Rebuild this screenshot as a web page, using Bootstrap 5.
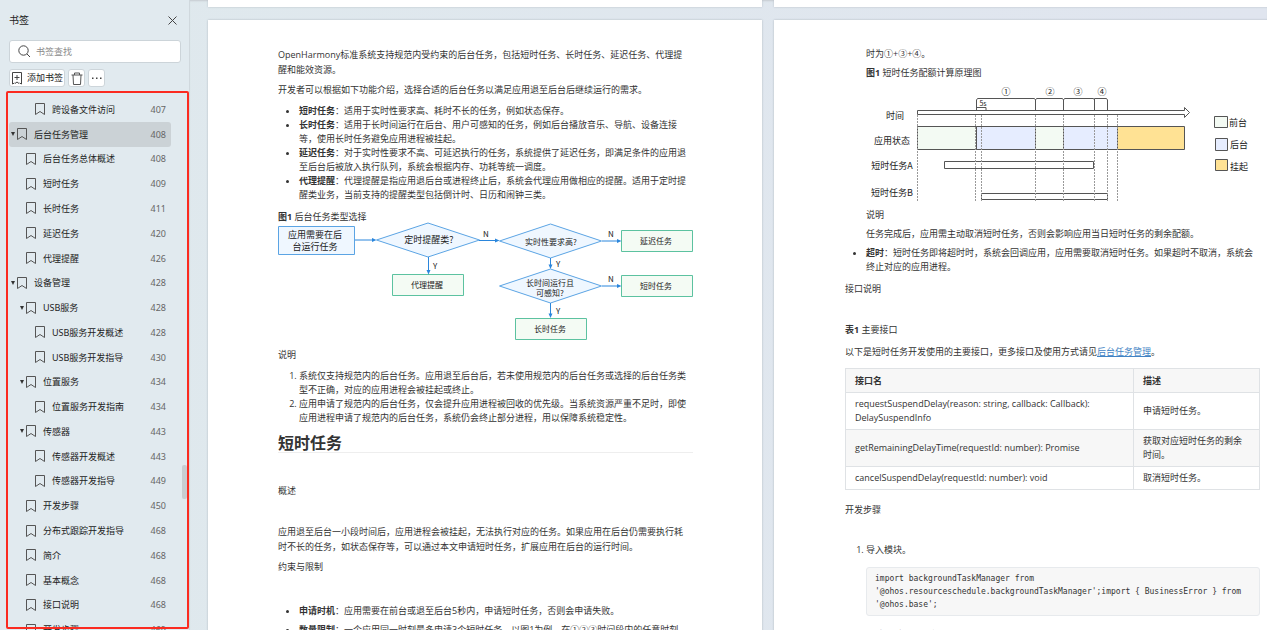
<!DOCTYPE html>
<html lang="zh-CN">
<head>
<meta charset="utf-8">
<meta name="viewport" content="width=device-width, initial-scale=1">
<title>书签</title>
<link href="https://cdn.jsdelivr.net/npm/bootstrap@5.3.0/dist/css/bootstrap.min.css" rel="stylesheet">
<style>
body{font:9px/15px "Open Sans","Noto Sans CJK SC",sans-serif;color:#333;background:linear-gradient(90deg,#dfe9ed,#e0e5ef);}
/* bookmark panel */
.side{width:190px;background:#e1eaef;border-right:1px solid #d0d8dd;font-family:"Noto Sans","Noto Sans CJK SC",sans-serif;color:#222}
.side-head{height:40px;font-size:10px;padding:0 8px 0 9px}
.close-btn{width:18px;height:18px}
.search-box{height:23px;margin:0 8px 0 9px;border:1px solid #ccd4d9;border-radius:3px;padding-left:8px}
.search-box input{font-size:9px;outline:0;height:19px;padding-left:5px}
.search-box input::placeholder{color:#8b8b8b}
.tools{padding:6px 9px 4px;gap:3px}
.tool-btn{height:18px;min-width:17px;padding:0 1px;font-size:9px;line-height:16px;background:#fff;border:1px solid #cdd5da;border-radius:3px;color:#222}
.tree-wrap{padding:6px 0 0 9px;min-height:0}
.tree-frame{inset:0 0 1px 6px;border:2px solid #fb2b20;border-radius:2px;pointer-events:none;z-index:2}
.tree{display:grid;grid-auto-rows:1fr;height:545px;width:162px}
.tree a{color:#222;padding:0 5px 0 2px;border-radius:3px}
.tree a.current{background:#cbd2d6}
.tree .lv1{padding-left:11px}
.tree .lv2{padding-left:20px}
.twist{width:6px;font-size:0}
.tree svg.mark-ico{margin-right:7px}
.page-no{color:#666}
.thumb{right:2px;top:374px;width:5px;height:34px;border-radius:2px;background:#c8cdd1}
/* document canvas */
.canvas{display:grid;grid-template-columns:554px 554px;grid-template-rows:7px 1fr;gap:13px 12px;padding-left:18px;box-shadow:inset 0 2px 2px -1px #c5cbd0}
.sheet{background:#fff;box-shadow:0 0 2px #aeb7bf}
.sheet-body{padding:27px 69px 0 70px;white-space:nowrap}
.sheet-body.right{padding-left:71px;padding-right:68px}
.sheet ul,.sheet ol{padding-left:21px;margin:0;line-height:14px}
.sheet p{margin:0}
.sheet svg{display:block;overflow:visible}
.sheet svg text{dominant-baseline:central;font-family:"Noto Sans CJK SC",sans-serif;fill:#222}
.s5{margin-top:5px!important}.s7{margin-top:7px!important}
.s26{margin-top:26px!important}.s30{margin-top:30px!important}
.title{font-size:16px;line-height:18px;font-weight:700;margin:9px 0 0;border-bottom:1px solid #eee}
.api{width:415px;margin:9px 0 12px;table-layout:fixed;white-space:normal;line-height:14px;color:#333}
.api th,.api td{border:1px solid #dfe2e5;padding:4px 9px;vertical-align:middle}
.api th{padding-top:5px}
.api .c1{width:288px}
.api tr.tint>*{background:#f7f7f7}
.source{margin:10px 0 12px;padding:4px 8px;height:49px;background:#f7f7f7;border:1px solid #e7eaed;border-radius:3px;font:8px/13px "DejaVu Sans Mono",monospace;color:#333;overflow:hidden}
.doc-link{color:#4183c4;text-decoration:underline}
.flow .a{fill:#eff7ff;stroke:#5ba4e4}.flow .g{fill:#f4fbf4;stroke:#5cc2a0}
.flow .w{stroke:#2b86dc;fill:none}.flow .h{fill:#2b86dc}
.flow text{font-size:8px;text-anchor:middle}
.flow .t9,.timing text{font-size:9px}
.timing .n{text-anchor:middle}
.timing .o{fill:#fff;stroke:#555}.timing .fg{fill:#f3faf3;stroke:#555}.timing .bg{fill:#e6edff;stroke:#555}.timing .hang{fill:#ffe294;stroke:#555}
.timing .d{stroke:#999;stroke-dasharray:2 1;fill:none}
.timing .tiny{font-size:7px}
</style>
</head>
<body>
<svg class="d-none"><defs>
<symbol id="bm" viewBox="0 0 10 12"><path d="M.5.5h9v11L5 8.500.5 11.500z" fill="none" stroke="#555"/></symbol>
<symbol id="tw" viewBox="0 0 4 4"><path d="M0 0h4L2 4z" fill="#333"/></symbol>
</defs></svg>
<div class="d-flex vh-100 overflow-hidden">
<aside class="side d-flex flex-column flex-shrink-0 overflow-hidden">
  <div class="side-head d-flex flex-shrink-0 align-items-center justify-content-between"><span>书签</span>
    <button class="close-btn btn p-0 border-0 d-flex align-items-center justify-content-center" aria-label="关闭"><svg width="9" height="9"><path d="M.5.5l8 8m0-8l-8 8" stroke="#444" fill="none"/></svg></button></div>
  <label class="search-box d-flex flex-shrink-0 align-items-center bg-white"><svg width="13" height="13" viewBox="0 0 13 13"><circle cx="5.500" cy="5.500" r="4.700" fill="none" stroke="#444"/><path d="M9 9l3 3" stroke="#444"/></svg>
    <input type="search" class="border-0 bg-transparent w-75" placeholder="书签查找" aria-label="书签查找"></label>
  <div class="tools d-flex flex-shrink-0">
    <button class="tool-btn d-flex align-items-center"><svg class="me-1" width="12" height="13" viewBox="0 0 12 13"><path d="M3.500 11L1.500 12V.5h9V12l-2-1M4 11.500l2-1.500 2 1.500M6 3v5M3.500 5.500h5" fill="none" stroke="#444"/></svg>添加书签</button>
    <button class="tool-btn d-flex align-items-center justify-content-center" aria-label="删除"><svg width="12" height="13" viewBox="0 0 12 13"><path d="M.5 3h11M3.500 3V1h5v2M2 3l.5 9.500h7L10 3" fill="none" stroke="#555"/></svg></button>
    <button class="tool-btn d-flex align-items-center justify-content-center" aria-label="更多"><svg width="10" height="2"><path d="M0 .5h1.500V2H0zM4 .5h1.500V2H4zM8 .5h1.500V2H8z" fill="#444"/></svg></button>
  </div>
  <div class="tree-wrap position-relative flex-fill">
    <div class="tree-frame position-absolute"></div>
    <div class="thumb position-absolute"></div>
    <nav class="tree" id="tree" aria-label="书签"></nav>
  </div>
</aside>
<main class="canvas flex-fill overflow-hidden">
  <div class="sheet"></div><div class="sheet"></div>
  <article class="sheet sheet-body">
    <p>OpenHarmony标准系统支持规范内受约束的后台任务，包括短时任务、长时任务、延迟任务、代理提<br>醒和能效资源。</p>
    <p class="s5">开发者可以根据如下功能介绍，选择合适的后台任务以满足应用退至后台后继续运行的需求。</p>
    <ul class="s7">
      <li><b>短时任务</b>：适用于实时性要求高、耗时不长的任务，例如状态保存。</li>
      <li><b>长时任务</b>：适用于长时间运行在后台、用户可感知的任务，例如后台播放音乐、导航、设备连接<br>等，使用长时任务避免应用进程被挂起。</li>
      <li><b>延迟任务</b>：对于实时性要求不高、可延迟执行的任务，系统提供了延迟任务，即满足条件的应用退<br>至后台后被放入执行队列，系统会根据内存、功耗等统一调度。</li>
      <li><b>代理提醒</b>：代理提醒是指应用退后台或进程终止后，系统会代理应用做相应的提醒。适用于定时提<br>醒类业务，当前支持的提醒类型包括倒计时、日历和闹钟三类。</li>
    </ul>
    <p class="s7"><b>图1</b> 后台任务类型选择</p>
    <svg class="flow" width="415" height="116" viewBox="0 1 415 116">
      <path class="a" d="M.5 3.500h76v28H.5zM98.500 17L150 0l51.500 17L150 34zM221.500 18l51-17 51 17-51 17zM221.500 63l51-17 51 17-51 17z"/>
      <path class="g" d="M343.500 7.500h71v21h-71zM343.500 52.500h71v21h-71zM114.500 51.500h71v21h-71zM237.500 95.500h71v21h-71z"/>
      <path class="w" d="M77 17h18M201 17.500h18M324 18h17M324 63h17M150.500 34v14M272.500 35v8M272.500 80v12"/>
      <path class="h" d="M94 15l4.500 2-4.500 2zM217 15.500l4.500 2-4.500 2zM339 16l4.500 2-4.500 2zM339 61l4.500 2-4.500 2zM148.500 47l2 4.500 2-4.500zM270.500 41.500l2 4.500 2-4.500zM270.500 90.500l2 4.500 2-4.500z"/>
      <text class="t9" x="37" y="11">应用需要在后</text><text class="t9" x="37" y="23">台运行任务</text>
      <text class="t9" x="151" y="16">定时提醒类?</text><text x="273" y="18">实时性要求高?</text>
      <text x="272" y="59">长时间运行且</text><text x="272" y="69">可感知?</text>
      <text x="378" y="17">延迟任务</text><text x="378" y="62">短时任务</text><text x="149" y="61">代理提醒</text><text x="272" y="105">长时任务</text>
      <text x="208" y="10">N</text><text x="333" y="10">N</text><text x="333" y="55">N</text>
      <text x="157" y="42">Y</text><text x="280" y="40">Y</text><text x="280" y="87">Y</text>
    </svg>
    <p class="s7">说明</p>
    <ol class="s7">
      <li>系统仅支持规范内的后台任务。应用退至后台后，若未使用规范内的后台任务或选择的后台任务类<br>型不正确，对应的应用进程会被挂起或终止。</li>
      <li>应用申请了规范内的后台任务，仅会提升应用进程被回收的优先级。当系统资源严重不足时，即使<br>应用进程申请了规范内的后台任务，系统仍会终止部分进程，用以保障系统稳定性。</li>
    </ol>
    <h1 class="title">短时任务</h1>
    <p class="s30">概述</p>
    <p class="s26">应用退至后台一小段时间后，应用进程会被挂起，无法执行对应的任务。如果应用在后台仍需要执行耗<br>时不长的任务，如状态保存等，可以通过本文申请短时任务，扩展应用在后台的运行时间。</p>
    <p class="s5">约束与限制</p>
    <ul class="s30">
      <li><b>申请时机</b>：应用需要在前台或退至后台5秒内，申请短时任务，否则会申请失败。</li>
      <li class="s5"><b>数量限制</b>：一个应用同一时刻最多申请3个短时任务。以图1为例，在①②③时间段内的任意时刻，</li>
    </ul>
  </article>
  <article class="sheet sheet-body right">
    <ul class="list-unstyled" style="padding-left:21px"><li>
      <p>时为①+③+④。</p>
      <p class="s5"><b>图1</b> 短时任务配额计算原理图</p>
      <svg class="timing s5" width="394" height="118" viewBox="0 0 394 118">
        <path class="fg" d="M51.500 41.500h59v23h-59zM169.500 41.500h28v23h-28zM348.500 31.500h13v11h-13z"/>
        <path class="bg" d="M110.500 41.500h59v23h-59zM197.500 41.500h54v23h-54zM349.500 53.500h12v12h-12z"/>
        <path class="hang" d="M251.500 41.500h67v23h-67zM349.500 74.500h12v11h-12z"/>
        <path class="o" d="M78.500 76.500h149v7h-149zM115.500 108.500h126v6h-126zM318.500 25.500h-267v4h267v3l5-5-5-5z"/>
        <path d="M110.500 25V15l1-1.500h57l1 1.500v10V15l1-1.500h26l1 1.500v10V15l1-1.500h29l1 1.500v10V13.500h12l1 1.500v10M111 22.500h9v3" fill="none" stroke="#555"/>
        <path class="d" d="M51.500 30v86M109.500 30v86M115.500 30v86M169.500 30v86M197.500 30v86M228.500 30v86M241.500 30v86M251.500 30v86"/>
        <text class="n" x="140" y="6">①</text><text class="n" x="184" y="6">②</text><text class="n" x="212" y="6">③</text><text class="n" x="236" y="6">④</text>
        <text class="n tiny" x="117" y="18">5s</text>
        <text class="n" x="29" y="30">时间</text><text class="n" x="26" y="55">应用状态</text><text class="n" x="26" y="80">短时任务A</text><text class="n" x="26" y="107">短时任务B</text>
        <text x="363" y="37">前台</text><text x="364" y="59">后台</text><text x="364" y="81">挂起</text>
      </svg>
      <p class="s5">说明</p>
      <p class="s5">任务完成后，应用需主动取消短时任务，否则会影响应用当日短时任务的剩余配额。</p>
    </li></ul>
    <ul class="s5"><li><b>超时</b>：短时任务即将超时时，系统会回调应用，应用需要取消短时任务。如果超时不取消，系统会<br>终止对应的应用进程。</li></ul>
    <p class="s7">接口说明</p>
    <p class="s26"><b>表1</b> 主要接口</p>
    <p class="s7">以下是短时任务开发使用的主要接口，更多接口及使用方式请见<a href="#" class="doc-link">后台任务管理</a>。</p>
    <table class="api">
      <thead><tr class="tint"><th class="c1">接口名</th><th>描述</th></tr></thead>
      <tbody>
        <tr><td>requestSuspendDelay(reason: string, callback: Callback): DelaySuspendInfo</td><td>申请短时任务。</td></tr>
        <tr class="tint"><td>getRemainingDelayTime(requestId: number): Promise</td><td>获取对应短时任务的剩余<br>时间。</td></tr>
        <tr><td>cancelSuspendDelay(requestId: number): void</td><td>取消短时任务。</td></tr>
      </tbody>
    </table>
    <p>开发步骤</p>
    <ol class="s26">
      <li>导入模块。<pre class="source">import backgroundTaskManager from
'@ohos.resourceschedule.backgroundTaskManager';import { BusinessError } from
'@ohos.base';</pre></li>
      <li>申请短时任务并实现回调函数。</li>
    </ol>
  </article>
</main>
</div>
<script src="https://cdn.jsdelivr.net/npm/bootstrap@5.3.0/dist/js/bootstrap.bundle.min.js"></script>
<script>
// level, title, page, has children
const items=[[2,'跨设备文件访问',407],[0,'后台任务管理',408,1],[1,'后台任务总体概述',408],[1,'短时任务',409],[1,'长时任务',411],[1,'延迟任务',420],[1,'代理提醒',426],[0,'设备管理',428,1],[1,'USB服务',428,1],[2,'USB服务开发概述',428],[2,'USB服务开发指导',430],[1,'位置服务',434,1],[2,'位置服务开发指南',434],[1,'传感器',443,1],[2,'传感器开发概述',443],[2,'传感器开发指导',449],[1,'开发步骤',450],[1,'分布式跟踪开发指导',468],[1,'简介',468],[1,'基本概念',468],[1,'接口说明',468],[1,'开发步骤',469]];
document.getElementById('tree').innerHTML=items.map(([lv,t,p,kids],i)=>
`<a href="#" class="lv${lv} d-flex align-items-center text-decoration-none${i===1?' current':''}"><span class="twist d-flex">${kids?'<svg width="4" height="4"><use href="#tw"/></svg>':''}</span><svg class="mark-ico" width="10" height="12"><use href="#bm"/></svg><span>${t}</span><span class="page-no ms-auto">${p}</span></a>`).join('');
</script>
</body>
</html>
